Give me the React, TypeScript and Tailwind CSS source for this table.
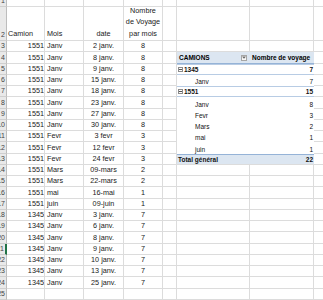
import React from "react";

// Sheet rows 3..24 : Camion / Mois / date / Nombre de Voyage par mois
const sheetRows = [
  ["1551", "Janv", "2 janv.", "8"],
  ["1551", "Janv", "8 janv.", "8"],
  ["1551", "Janv", "9 janv.", "8"],
  ["1551", "Janv", "15 janv.", "8"],
  ["1551", "Janv", "18 janv.", "8"],
  ["1551", "Janv", "23 janv.", "8"],
  ["1551", "Janv", "27 janv.", "8"],
  ["1551", "Janv", "30 janv.", "8"],
  ["1551", "Fevr", "3 fevr", "3"],
  ["1551", "Fevr", "12 fevr", "3"],
  ["1551", "Fevr", "24 fevr", "3"],
  ["1551", "Mars", "09-mars", "2"],
  ["1551", "Mars", "22-mars", "2"],
  ["1551", "mai", "16-mai", "1"],
  ["1551", "juin", "09-juin", "1"],
  ["1345", "Janv", "3 janv.", "7"],
  ["1345", "Janv", "6 janv.", "7"],
  ["1345", "Janv", "8 janv.", "7"],
  ["1345", "Janv", "9 janv.", "7"],
  ["1345", "Janv", "10 janv.", "7"],
  ["1345", "Janv", "13 janv.", "7"],
  ["1345", "Janv", "25 janv.", "7"],
];

type PivotRow = { kind: "head" | "group" | "item" | "total"; label?: string; value?: string };

// Pivot table sits in columns F:G, rows 4..13
const pivot: Record<number, PivotRow> = {
  4: { kind: "head" },
  5: { kind: "group", label: "1345", value: "7" },
  6: { kind: "item", label: "Janv", value: "7" },
  7: { kind: "group", label: "1551", value: "15" },
  8: { kind: "item", label: "Janv", value: "8" },
  9: { kind: "item", label: "Fevr", value: "3" },
  10: { kind: "item", label: "Mars", value: "2" },
  11: { kind: "item", label: "mai", value: "1" },
  12: { kind: "item", label: "juin", value: "1" },
  13: { kind: "total", label: "Total général", value: "22" },
};

const cell =
  "shrink-0 border-r border-b border-[#dcdcdc] overflow-hidden whitespace-nowrap flex items-end leading-[10px]";

function RowHeader({ n, active }: { n: number; active?: boolean }) {
  return (
    <div
      className={`w-[7px] shrink-0 bg-[#e9e9e9] border-b border-[#cfcfcf] overflow-hidden whitespace-nowrap flex items-end justify-end pr-[1px] text-[7px] leading-[10px] text-[#444] ${
        active ? "border-r-2 border-r-[#217346]" : "border-r border-r-[#bdbdbd]"
      }`}
    >
      {n}
    </div>
  );
}

function CollapseBox() {
  return (
    <span className="w-[5px] h-[5px] border border-[#8c8c8c] flex items-center justify-center mr-[1px] mb-[2px] bg-white">
      <span className="w-[3px] h-px bg-[#555]" />
    </span>
  );
}

function PivotCell({ row }: { row: PivotRow }) {
  if (row.kind === "head") {
    return (
      <div className="w-[137px] shrink-0 flex bg-[#dce6f1] border-b border-[#95b3d7] font-bold text-[6.5px] leading-[10px] text-black">
        <div className="w-[73px] flex items-end justify-between pl-[2px] pr-[3px]">
          <span>CAMIONS</span>
          <span className="w-[6px] h-[6px] mb-[2px] border border-[#a6a6a6] bg-[#f7f7f7] flex items-center justify-center">
            <svg width="4" height="3" viewBox="0 0 4 3">
              <path d="M0 0.5h4L2 2.7z" fill="#666" />
            </svg>
          </span>
        </div>
        <div className="w-[64px] flex items-end pl-[2px]">Nombre de voyage</div>
      </div>
    );
  }
  const bold = row.kind !== "item";
  const box =
    row.kind === "group"
      ? "border-t border-b border-[#b8cce4] bg-white"
      : row.kind === "total"
        ? "border-t border-[#95b3d7] bg-[#dce6f1] border-b border-b-[#dcdcdc]"
        : "bg-white";
  return (
    <div
      className={`w-[137px] shrink-0 flex text-[6.5px] leading-[9px] text-[#111] ${bold ? "font-bold" : ""} ${box}`}
    >
      <div className={`w-[73px] flex items-end ${row.kind === "item" ? "pl-[18px]" : "pl-[1px]"}`}>
        {row.kind === "group" && <CollapseBox />}
        <span>{row.label}</span>
      </div>
      <div className="w-[64px] flex items-end justify-end pr-[1px]">{row.value}</div>
    </div>
  );
}

function EmptyRight() {
  return (
    <>
      <div className={`${cell} w-[73px]`} />
      <div className={`${cell} w-[64px]`} />
    </>
  );
}

export default function App() {
  const rows: React.ReactNode[] = [];

  // rows 3..26
  for (let n = 3; n <= 26; n++) {
    const d = sheetRows[n - 3];
    const p = pivot[n];
    rows.push(
      <div key={n} className="flex h-[11.25px]">
        <RowHeader n={n} active={n === 21} />
        <div className={`${cell} w-[38px] justify-end`}>{d ? d[0] : ""}</div>
        <div className={`${cell} w-[39px] pl-[2px]`}>{d ? d[1] : ""}</div>
        <div className={`${cell} w-[40px] justify-center`}>{d ? d[2] : ""}</div>
        <div className={`${cell} w-[39px] justify-center`}>{d ? d[3] : ""}</div>
        <div className={`${cell} w-[14px]`} />
        {p ? <PivotCell row={p} /> : <EmptyRight />}
        <div className={`${cell} w-[20px]`} />
      </div>
    );
  }

  return (
    <div
      className="w-[323px] h-[300px] overflow-hidden bg-white text-[7.25px] text-[#1a1a1a]"
      style={{ fontFamily: '"Liberation Sans", Arial, sans-serif' }}
    >
      {/* row 1, cut off at the top */}
      <div className="flex h-[7px]">
        <RowHeader n={1} />
        <div className={`${cell} w-[38px]`} />
        <div className={`${cell} w-[39px]`} />
        <div className={`${cell} w-[40px]`} />
        <div className={`${cell} w-[39px]`} />
        <div className={`${cell} w-[14px]`} />
        <div className={`${cell} w-[73px]`} />
        <div className={`${cell} w-[64px]`} />
        <div className={`${cell} w-[20px]`} />
      </div>

      {/* row 2: column titles */}
      <div className="flex h-[34px]">
        <RowHeader n={2} />
        <div className={`${cell} w-[38px] pl-[1px] pb-[1px]`}>Camion</div>
        <div className={`${cell} w-[39px] pl-[2px] pb-[1px]`}>Mois</div>
        <div className={`${cell} w-[40px] justify-center pb-[1px]`}>date</div>
        <div className="w-[39px] shrink-0 border-r border-b border-[#dcdcdc] overflow-hidden flex items-end justify-center pb-[1px]">
          <span className="block text-center leading-[11.3px] whitespace-normal">
            Nombre
            <br />
            de Voyage
            <br />
            par mois
          </span>
        </div>
        <div className={`${cell} w-[14px]`} />
        <div className={`${cell} w-[73px]`} />
        <div className={`${cell} w-[64px]`} />
        <div className={`${cell} w-[20px]`} />
      </div>

      {rows}
    </div>
  );
}
